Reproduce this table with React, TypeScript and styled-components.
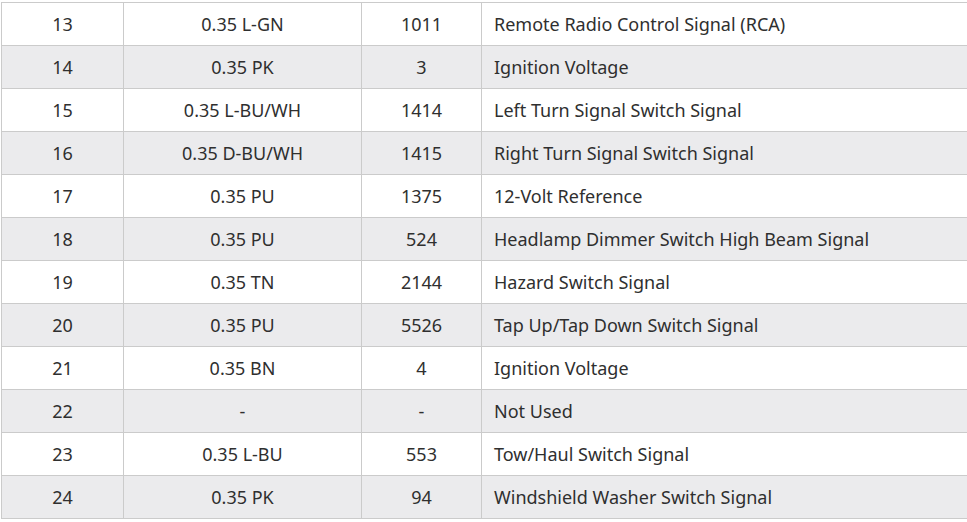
import React from "react";
import styled, { createGlobalStyle } from "styled-components";

const Global = createGlobalStyle`
  html, body { margin: 0; padding: 0; background: #ffffff; overflow: hidden; }
`;

const Page = styled.div`
  padding: 2px 0 0 1px;
  width: 1200px;
`;

const Table = styled.table`
  border-collapse: collapse;
  table-layout: fixed;
  width: 1100px;
  font-family: "Noto Sans", "Open Sans", sans-serif;
  font-size: 18px;
  color: #2f2f2f;
`;

const Row = styled.tr<{ $alt: boolean }>`
  background: ${(p) => (p.$alt ? "#ebebed" : "#ffffff")};
`;

const Cell = styled.td<{ $align?: "left" | "center" }>`
  height: 43px;
  padding: 0 ${(p) => (p.$align === "left" ? "12px" : "0")};
  border: 1px solid #cbcbcb;
  text-align: ${(p) => p.$align ?? "center"};
  vertical-align: middle;
  white-space: nowrap;
  line-height: 1;
  box-sizing: border-box;
`;

const rows: [string, string, string, string][] = [
  ["13", "0.35 L-GN", "1011", "Remote Radio Control Signal (RCA)"],
  ["14", "0.35 PK", "3", "Ignition Voltage"],
  ["15", "0.35 L-BU/WH", "1414", "Left Turn Signal Switch Signal"],
  ["16", "0.35 D-BU/WH", "1415", "Right Turn Signal Switch Signal"],
  ["17", "0.35 PU", "1375", "12-Volt Reference"],
  ["18", "0.35 PU", "524", "Headlamp Dimmer Switch High Beam Signal"],
  ["19", "0.35 TN", "2144", "Hazard Switch Signal"],
  ["20", "0.35 PU", "5526", "Tap Up/Tap Down Switch Signal"],
  ["21", "0.35 BN", "4", "Ignition Voltage"],
  ["22", "-", "-", "Not Used"],
  ["23", "0.35 L-BU", "553", "Tow/Haul Switch Signal"],
  ["24", "0.35 PK", "94", "Windshield Washer Switch Signal"],
];

export default function App() {
  return (
    <Page>
      <Global />
      <Table>
        <colgroup>
          <col style={{ width: 122 }} />
          <col style={{ width: 238 }} />
          <col style={{ width: 120 }} />
          <col />
        </colgroup>
        <tbody>
          {rows.map((r, i) => (
            <Row key={r[0]} $alt={i % 2 === 1}>
              <Cell>{r[0]}</Cell>
              <Cell>{r[1]}</Cell>
              <Cell>{r[2]}</Cell>
              <Cell $align="left">{r[3]}</Cell>
            </Row>
          ))}
        </tbody>
      </Table>
    </Page>
  );
}
